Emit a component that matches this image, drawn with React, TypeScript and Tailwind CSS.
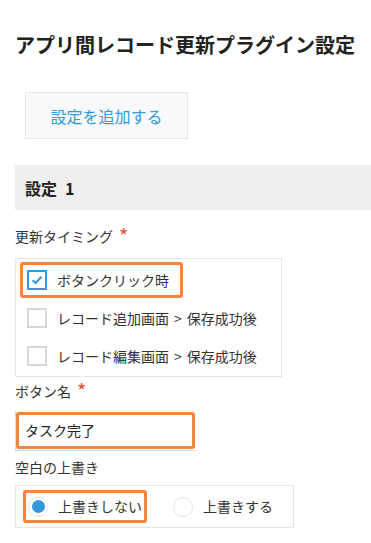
import React from "react";

const font = { fontFamily: '"Noto Sans CJK JP", "Noto Sans", sans-serif' };

function Check({ checked }: { checked: boolean }) {
  return (
    <div
      className={
        "w-[20px] h-[20px] shrink-0 border-2 flex items-center justify-center bg-white " +
        (checked ? "border-[#3498db]" : "border-[#d8d8d8]")
      }
    >
      {checked && (
        <svg width="12" height="10" viewBox="0 0 12 10">
          <path d="M1.5 5.2 L4.6 8 L10.5 1.8" fill="none" stroke="#3498db" strokeWidth="2" />
        </svg>
      )}
    </div>
  );
}

function Radio({ checked }: { checked: boolean }) {
  return (
    <div className="w-[20px] h-[20px] shrink-0 rounded-full border border-[#e3e3e3] bg-white flex items-center justify-center">
      {checked && <div className="w-[13px] h-[13px] rounded-full bg-[#3498db]" />}
    </div>
  );
}

function Req() {
  return <span className="ml-[6px] text-[#e74c3c] text-[20px] leading-[14px] align-[-5px]">*</span>;
}

export default function App() {
  return (
    <div className="w-[371px] h-[543px] bg-white text-[#333] overflow-hidden" style={font}>
      <div className="pl-[15px] flex flex-col">
        <h1 className="mt-[31px] text-[20px] leading-[28px] font-bold text-[#222]">
          アプリ間レコード更新プラグイン設定
        </h1>
        <div className="mt-[33px] ml-[10px] w-[163px] h-[47px] border border-[#e3e7e8] bg-[#f7f9fa] flex items-center justify-center text-[16px] text-[#3498db]">
          設定を追加する
        </div>
        <div className="mt-[26px] h-[45px] bg-[#efefef] flex items-center pl-[10px] text-[16px] font-bold text-[#222]">
          <span>設定</span>
          <span className="ml-[8px]">1</span>
        </div>
        <div className="mt-[16px] h-[20px] text-[14px] leading-[20px] flex items-center">
          <span>更新タイミング</span>
          <Req />
        </div>
        <div className="mt-[12px] w-[267px] border border-[#e3e7e8] pt-[2px] pb-[1px] flex flex-col text-[14px]">
          <div className="h-[38px] flex items-center pl-[4px]">
            <div className="w-[163px] h-[36px] border-[3px] border-[#f5853c] rounded-[3px] flex items-center pl-[4px] gap-[10px]">
              <Check checked />
              <span>ボタンクリック時</span>
            </div>
          </div>
          <div className="h-[38px] flex items-center pl-[11px] gap-[10px]">
            <Check checked={false} />
            <span>
              レコード追加画面<span className="mx-[5px]">&gt;</span>保存成功後
            </span>
          </div>
          <div className="h-[38px] flex items-center pl-[11px] gap-[10px]">
            <Check checked={false} />
            <span>
              レコード編集画面<span className="mx-[5px]">&gt;</span>保存成功後
            </span>
          </div>
        </div>
        <div className="mt-[4px] h-[20px] text-[14px] leading-[20px] flex items-center">
          <span>ボタン名</span>
          <Req />
        </div>
        <div className="mt-[10px] w-[180px] h-[40px] border-l border-b border-[#dcdcdc]">
          <div className="w-[179px] h-[37px] mt-[1px] border-[3px] border-[#f5853c] rounded-[3px] flex items-center pl-[6px] text-[14px] text-[#222]">
            タスク完了
          </div>
        </div>
        <div className="mt-[6px] text-[14px] leading-[20px]">空白の上書き</div>
        <div className="mt-[8px] w-[279px] h-[43px] border border-[#e3e7e8] flex items-center pl-[7px] text-[14px]">
          <div className="h-[33px] w-[124px] border-[3px] border-[#f5853c] rounded-[3px] flex items-center pl-[2px] gap-[10px]">
            <Radio checked />
            <span>上書きしない</span>
          </div>
          <div className="ml-[26px] flex items-center gap-[10px]">
            <Radio checked={false} />
            <span>上書きする</span>
          </div>
        </div>
      </div>
    </div>
  );
}
